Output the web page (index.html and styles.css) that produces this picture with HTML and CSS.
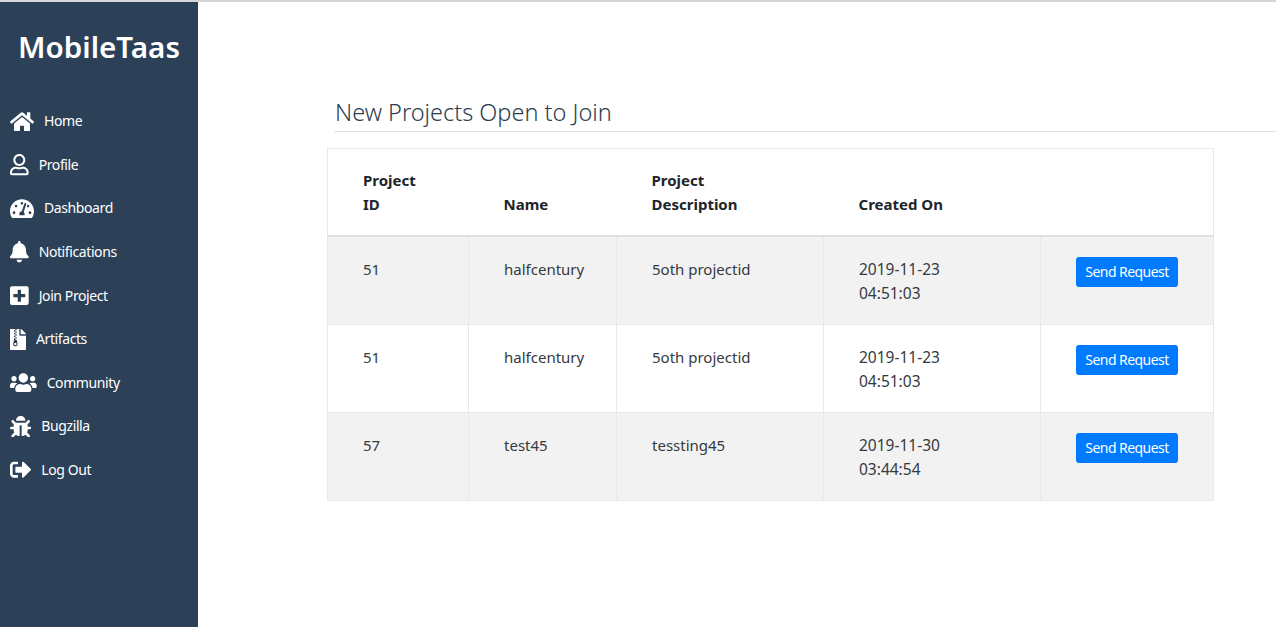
FILE: index.html
```html
<!DOCTYPE html>
<html lang="en">
<head>
<meta charset="utf-8">
<title>MobileTaas</title>
<link rel="stylesheet" href="styles.css">
</head>
<body>
<div class="app">
  <nav class="sidebar">
    <div class="brand">MobileTaas</div>
    <ul class="menu">
      <li><a href="#"><svg class="icon" viewBox="0 0 576 512"><path d="M280.37 148.26L96 300.11V464a16 16 0 0 0 16 16l112.06-.29a16 16 0 0 0 15.92-16V368a16 16 0 0 1 16-16h64a16 16 0 0 1 16 16v95.64a16 16 0 0 0 16 16.05L464 480a16 16 0 0 0 16-16V300L295.67 148.26a12.19 12.19 0 0 0-15.3 0zM571.6 251.47L488 182.56V44.05a12 12 0 0 0-12-12h-56a12 12 0 0 0-12 12v72.61L318.47 43a48 48 0 0 0-61 0L4.34 251.47a12 12 0 0 0-1.6 16.9l25.5 31A12 12 0 0 0 45.15 301l235.22-193.74a12.19 12.19 0 0 1 15.3 0L530.9 301a12 12 0 0 0 16.9-1.6l25.5-31a12 12 0 0 0-1.7-16.93z"/></svg>Home</a></li>
      <li><a href="#"><svg class="icon" viewBox="0 0 448 512"><path d="M313.6 304c-28.7 0-42.5 16-89.6 16-47.1 0-60.8-16-89.6-16C60.2 304 0 364.2 0 438.4V464c0 26.5 21.5 48 48 48h352c26.5 0 48-21.5 48-48v-25.6c0-74.2-60.2-134.4-134.4-134.4zM400 464H48v-25.6c0-47.6 38.8-86.4 86.4-86.4 14.6 0 38.3 16 89.6 16 51.7 0 74.9-16 89.6-16 47.6 0 86.4 38.8 86.4 86.4V464zM224 288c79.5 0 144-64.5 144-144S303.5 0 224 0 80 64.5 80 144s64.5 144 144 144zm0-240c52.9 0 96 43.1 96 96s-43.1 96-96 96-96-43.1-96-96 43.1-96 96-96z"/></svg>Profile</a></li>
      <li><a href="#"><svg class="icon" viewBox="0 0 576 512"><path d="M288 32C128.94 32 0 160.94 0 320c0 52.8 14.25 102.26 39.06 144.8 5.61 9.62 16.3 15.2 27.44 15.2h443c11.14 0 21.83-5.58 27.44-15.2C561.75 422.26 576 372.8 576 320c0-159.06-128.94-288-288-288zm0 64c14.71 0 26.58 10.13 30.32 23.65-1.11 2.26-2.64 4.23-3.45 6.67l-9.22 27.67c-5.13 3.49-10.97 6.01-17.64 6.01-17.67 0-32-14.33-32-32S270.33 96 288 96zM96 384c-17.67 0-32-14.33-32-32s14.33-32 32-32 32 14.33 32 32-14.33 32-32 32zm48-160c-17.67 0-32-14.33-32-32s14.33-32 32-32 32 14.33 32 32-14.33 32-32 32zm246.77-72.41l-61.33 184C343.13 347.33 352 364.54 352 384c0 11.72-3.38 22.55-8.88 32H232.88c-5.5-9.45-8.88-20.28-8.88-32 0-33.94 26.5-61.43 59.9-63.59l61.34-184.01c4.17-12.56 17.73-19.45 30.36-15.17 12.57 4.19 19.35 17.79 15.17 30.36zm14.66 57.2l15.52-46.55c3.47-1.29 7.13-2.23 11.05-2.23 17.67 0 32 14.33 32 32s-14.33 32-32 32c-11.38-.01-20.89-6.28-26.57-15.22zM480 384c-17.67 0-32-14.33-32-32s14.33-32 32-32 32 14.33 32 32-14.33 32-32 32z"/></svg>Dashboard</a></li>
      <li><a href="#"><svg class="icon" viewBox="0 0 448 512"><path d="M224 512c35.32 0 63.97-28.65 63.97-64H160.03c0 35.35 28.65 64 63.97 64zm215.39-149.71c-19.32-20.76-55.47-51.99-55.47-154.29 0-77.7-54.48-139.9-127.94-155.16V32c0-17.67-14.32-32-31.98-32s-31.98 14.33-31.98 32v20.84C118.56 68.1 64.08 130.3 64.08 208c0 102.3-36.15 133.53-55.47 154.29-6 6.45-8.66 14.16-8.61 21.71.11 16.4 12.98 32 32.1 32h383.8c19.12 0 32-15.6 32.1-32 .05-7.55-2.61-15.27-8.61-21.71z"/></svg>Notifications</a></li>
      <li><a href="#"><svg class="icon" viewBox="0 0 448 512"><path d="M400 32H48C21.5 32 0 53.5 0 80v352c0 26.5 21.5 48 48 48h352c26.5 0 48-21.5 48-48V80c0-26.5-21.5-48-48-48zm-32 252c0 6.6-5.4 12-12 12h-92v92c0 6.6-5.4 12-12 12h-56c-6.6 0-12-5.4-12-12v-92H92c-6.6 0-12-5.4-12-12v-56c0-6.6 5.4-12 12-12h92v-92c0-6.6 5.4-12 12-12h56c6.6 0 12 5.4 12 12v92h92c6.6 0 12 5.4 12 12v56z"/></svg>Join Project</a></li>
      <li><a href="#"><svg class="icon" viewBox="0 0 384 512"><path d="M377 105L279.1 7c-4.5-4.5-10.6-7-17-7H256v128h128v-6.1c0-6.3-2.5-12.4-7-16.9zM128.4 336c-17.9 0-32.4 12.1-32.4 27 0 15 14.6 27 32.5 27s32.4-12.1 32.4-27-14.6-27-32.5-27zM224 136V0h-63.6v32h-32V0H24C10.7 0 0 10.7 0 24v464c0 13.3 10.7 24 24 24h336c13.3 0 24-10.7 24-24V160H248c-13.2 0-24-10.8-24-24zM95.9 32h32v32h-32zm32.3 384c-33.2 0-58-30.4-51.4-62.9L96.4 256v-32h32v-32h-32v-32h32v-32h-32V96h32V64h32v32h-32v32h32v32h-32v32h32v32h-32v32h22.1c5.7 0 10.7 4.1 11.8 9.7l17.3 87.7c6.4 32.4-18.4 62.6-51.4 62.6z"/></svg>Artifacts</a></li>
      <li><a href="#"><svg class="icon" viewBox="0 0 640 512"><path d="M96 224c35.3 0 64-28.7 64-64s-28.7-64-64-64-64 28.7-64 64 28.7 64 64 64zm448 0c35.3 0 64-28.7 64-64s-28.7-64-64-64-64 28.7-64 64 28.7 64 64 64zm32 32h-64c-17.6 0-33.5 7.1-45.1 18.6 40.3 22.1 68.9 62 75.1 109.4h66c17.7 0 32-14.3 32-32v-32c0-35.3-28.7-64-64-64zm-256 0c61.9 0 112-50.1 112-112S381.9 32 320 32 208 82.1 208 144s50.1 112 112 112zm76.8 32h-8.3c-20.8 10-43.9 16-68.5 16s-47.6-6-68.5-16h-8.3C179.6 288 128 339.6 128 403.2V432c0 26.5 21.5 48 48 48h288c26.5 0 48-21.5 48-48v-28.8c0-63.6-51.6-115.2-115.2-115.2zm-223.7-13.4C161.5 263.1 145.6 256 128 256H64c-35.3 0-64 28.7-64 64v32c0 17.7 14.3 32 32 32h65.9c6.3-47.4 34.9-87.3 75.2-109.4z"/></svg>Community</a></li>
      <li><a href="#"><svg class="icon" viewBox="0 0 512 512"><path d="M511.988 288.9c-.478 17.43-15.217 31.1-32.653 31.1H424v16c0 21.864-4.882 42.584-13.6 61.145l60.228 60.228c12.496 12.497 12.496 32.758 0 45.255-12.498 12.497-32.759 12.496-45.256 0l-54.736-54.736C345.886 467.965 314.351 480 280 480V236c0-6.627-5.373-12-12-12h-24c-6.627 0-12 5.373-12 12v244c-34.351 0-65.886-12.035-90.636-32.108l-54.736 54.736c-12.498 12.497-32.759 12.496-45.256 0-12.496-12.497-12.496-32.758 0-45.255l60.228-60.228C92.882 378.584 88 357.864 88 336v-16H32.666C15.23 320 .491 306.33.013 288.9-.484 270.816 14.028 256 32 256h56v-58.745l-46.628-46.628c-12.496-12.497-12.496-32.758 0-45.255 12.498-12.497 32.758-12.497 45.256 0L141.255 160h229.489l54.627-54.627c12.498-12.497 32.758-12.497 45.256 0 12.496 12.497 12.496 32.758 0 45.255L424 197.255V256h56c17.972 0 32.484 14.816 31.988 32.9zM257 0c-61.856 0-112 50.144-112 112h224C369 50.144 318.856 0 257 0z"/></svg>Bugzilla</a></li>
      <li><a href="#"><svg class="icon" viewBox="0 0 512 512"><path d="M497 273L329 441c-15 15-41 4.5-41-17v-96H152c-13.3 0-24-10.7-24-24v-96c0-13.3 10.7-24 24-24h136V88c0-21.4 25.9-32 41-17l168 168c9.3 9.4 9.3 24.6 0 34zM192 436v-40c0-6.6-5.4-12-12-12H96c-17.7 0-32-14.3-32-32V160c0-17.7 14.3-32 32-32h84c6.6 0 12-5.4 12-12V76c0-6.6-5.4-12-12-12H96c-53 0-96 43-96 96v192c0 53 43 96 96 96h84c6.6 0 12-5.4 12-12z"/></svg>Log Out</a></li>
    </ul>
  </nav>
  <main class="content">
    <h2 class="title">New Projects Open to Join</h2>
    <table class="projects">
      <colgroup>
        <col class="c1"><col class="c2"><col class="c3"><col class="c4"><col class="c5">
      </colgroup>
      <thead>
        <tr><th>Project ID</th><th>Name</th><th>Project Description</th><th>Created On</th><th></th></tr>
      </thead>
      <tbody>
        <tr><td>51</td><td>halfcentury</td><td>5oth projectid</td><td class="date">2019-11-23 04:51:03</td><td><button class="btn">Send Request</button></td></tr>
        <tr><td>51</td><td>halfcentury</td><td>5oth projectid</td><td class="date">2019-11-23 04:51:03</td><td><button class="btn">Send Request</button></td></tr>
        <tr><td>57</td><td>test45</td><td>tessting45</td><td class="date">2019-11-30 03:44:54</td><td><button class="btn">Send Request</button></td></tr>
      </tbody>
    </table>
  </main>
</div>
</body>
</html>
```
FILE: styles.css
```css
* { box-sizing: border-box; }
html, body { height: 100%; }
body {
  margin: 0;
  overflow: hidden;
  font-family: "Noto Sans", "Open Sans", sans-serif;
  font-size: 15px;
  line-height: 24px;
  color: #212529;
  background: #fff;
  border-top: 2px solid #d4d6d8;
}
.app { display: flex; height: 625px; }
.sidebar {
  flex: 0 0 198px;
  background: #2c4158;
  color: #fff;
  padding: 23px 0 0 10px;
}
.brand {
  margin-left: -10px;
  text-align: center;
  font-size: 29.6px;
  line-height: 44px;
  font-weight: 600;
}
.menu {
  list-style: none;
  margin: 30.5px 0 0;
  padding: 0;
}
.menu li { height: 43.6px; display: flex; align-items: center; }
.menu a {
  display: flex;
  align-items: center;
  gap: 10px;
  color: #fff;
  text-decoration: none;
  font-size: 14px;
  letter-spacing: -0.4px;
}
.icon { height: 21.33px; width: auto; fill: #fff; display: block; }
.content { flex: 1; min-width: 0; padding-top: 94px; }
.title {
  margin: 0 0 16px 136px;
  padding: 0 0 2px 1px;
  font-size: 23.5px;
  line-height: 33px;
  font-weight: 300;
  color: #2c3e50;
  border-bottom: 1px solid #dee2e6;
}
.projects {
  margin-left: 129px;
  width: 886px;
  table-layout: fixed;
  border-collapse: collapse;
  border: 1px solid #e6e8ea;
}
.c1 { width: 141px; }
.c2 { width: 148px; }
.c3 { width: 207px; }
.c4 { width: 217px; }
.c5 { width: 173px; }
.projects th {
  padding: 19px 35px;
  text-align: left;
  vertical-align: bottom;
  font-weight: 700;
  font-size: 15px;
  border-bottom: 2px solid #dee2e6;
}
.projects td {
  height: 88px;
  padding: 20px 35px 19px;
  vertical-align: top;
  color: #343a40;
  border: 1px solid #e6e8ea;
}
.projects td.date { padding-right: 70px; font-size: 15.5px; }
.projects tbody tr:nth-child(odd) { background: #f2f2f2; }
.btn {
  display: block;
  width: 102px;
  height: 30px;
  padding: 0;
  border: 0;
  border-radius: 3px;
  background: #007bff;
  color: #fff;
  font: inherit;
  font-size: 14px;
  letter-spacing: -0.55px;
  white-space: nowrap;
}
```
